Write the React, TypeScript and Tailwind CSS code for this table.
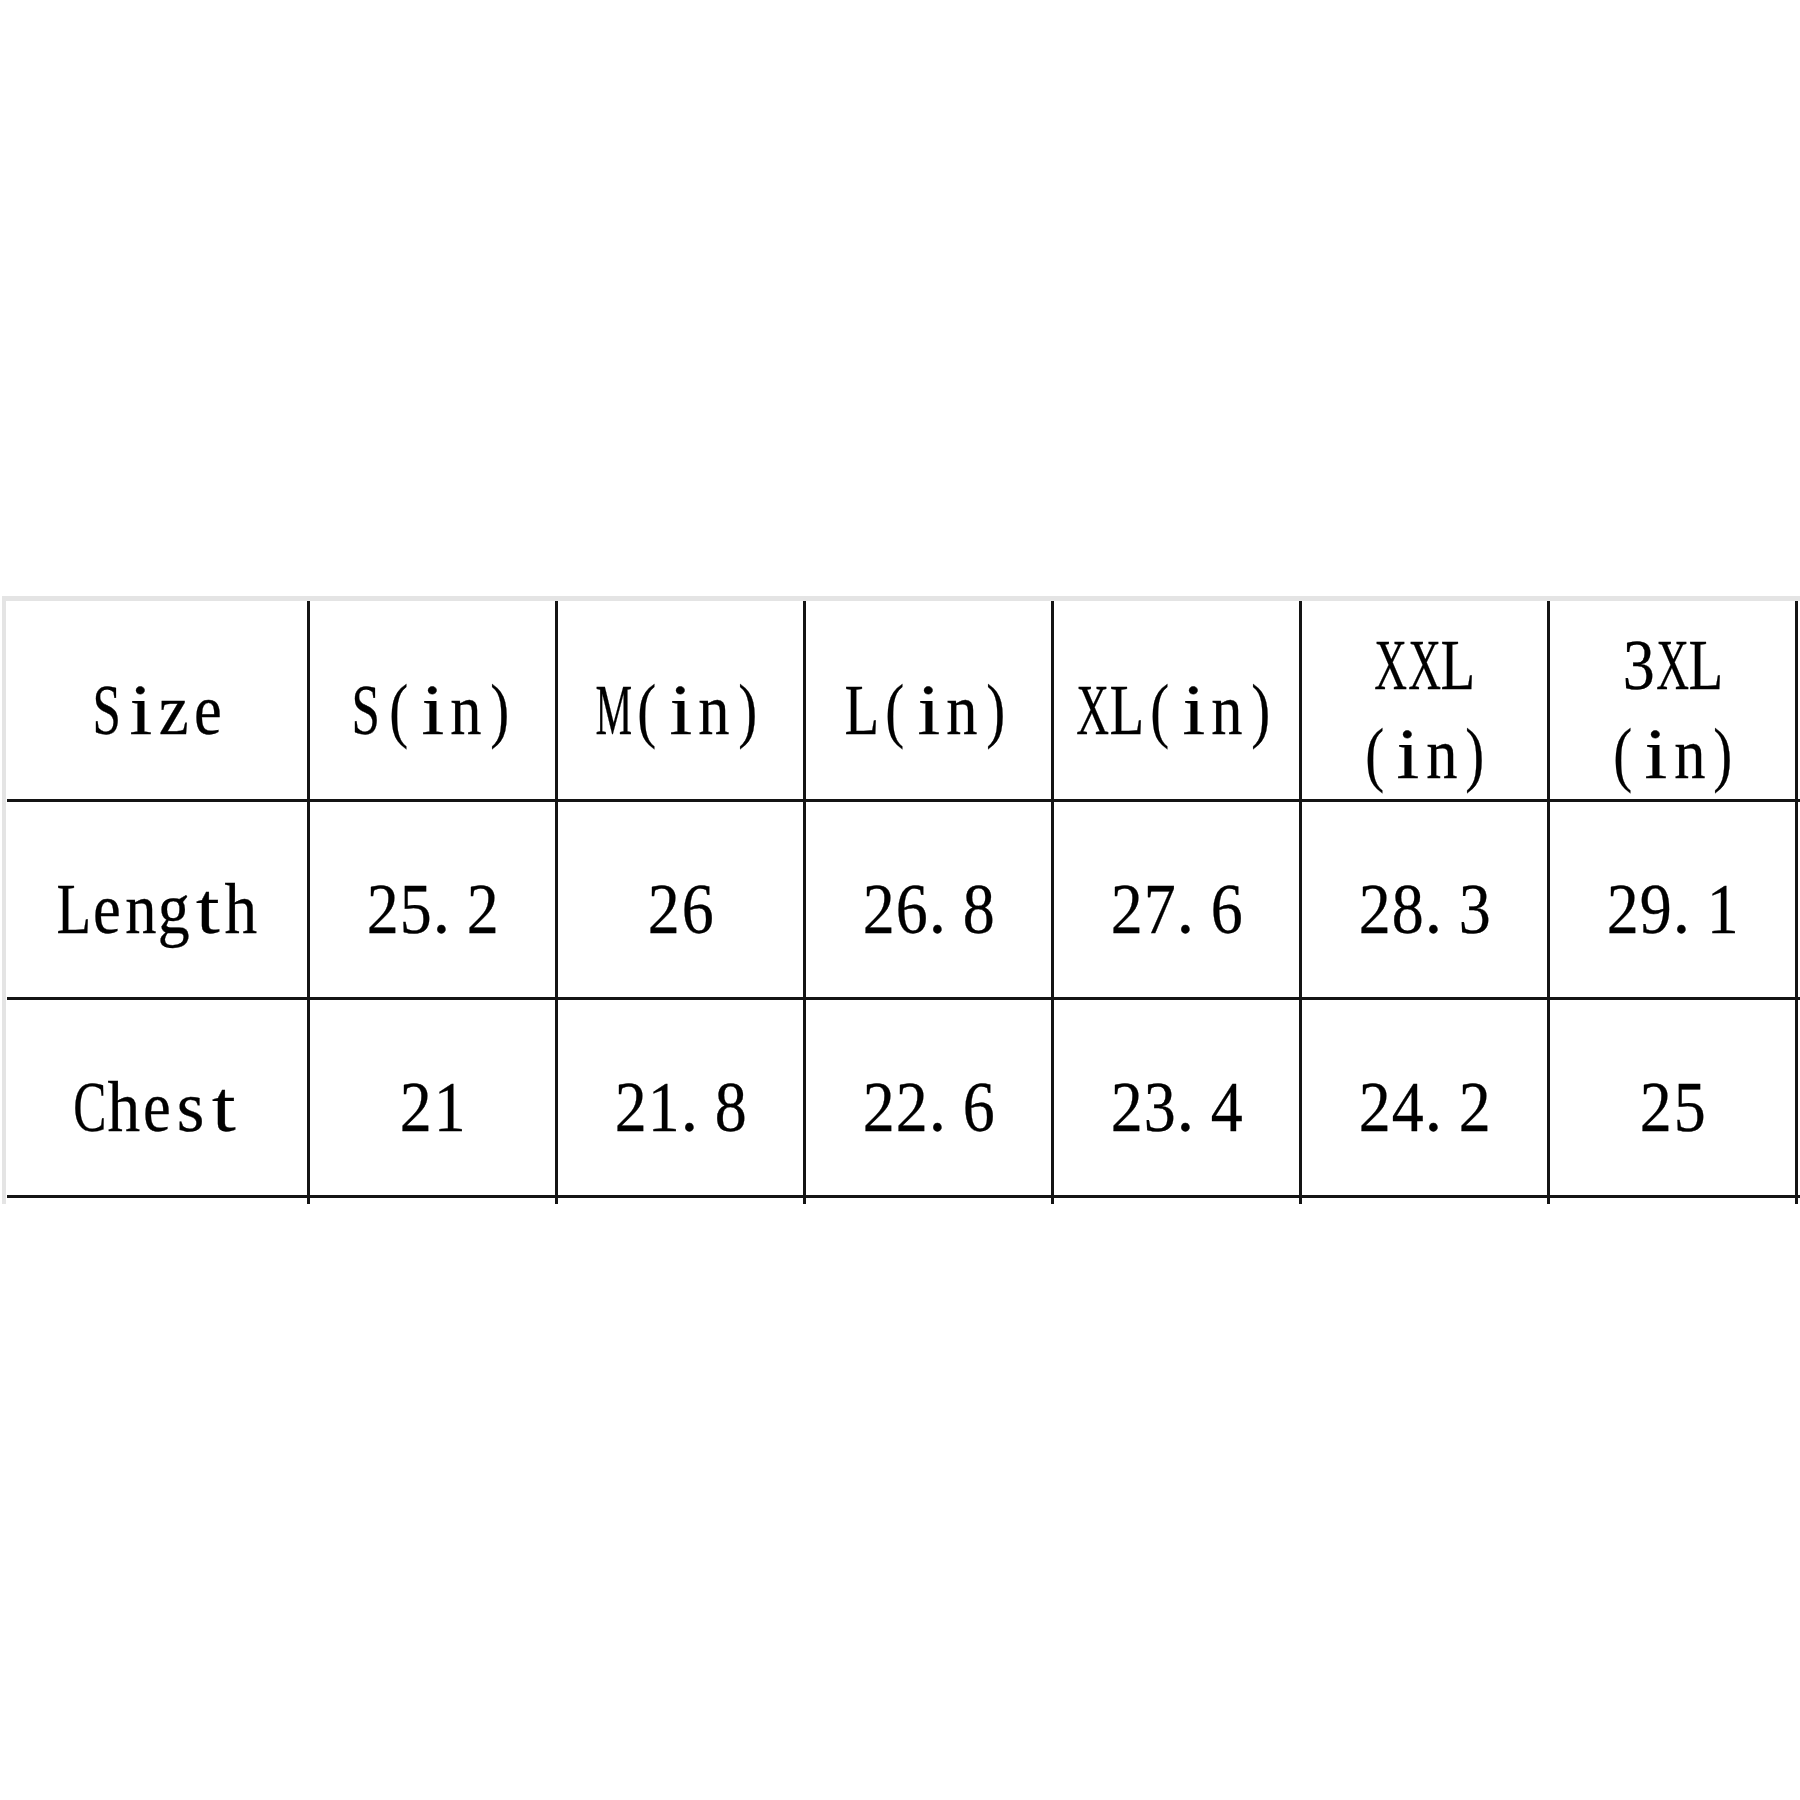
import React from "react";

const scaleClass: Record<string, string> = {
  "0": "scale-x-[0.9]",
  "1": "scale-x-[0.9]",
  "2": "scale-x-[0.9]",
  "3": "scale-x-[0.9]",
  "4": "scale-x-[0.9]",
  "5": "scale-x-[0.9]",
  "6": "scale-x-[0.9]",
  "7": "scale-x-[0.9]",
  "8": "scale-x-[0.9]",
  "9": "scale-x-[0.9]",
  S: "scale-x-[0.72]",
  M: "scale-x-[0.58]",
  L: "scale-x-[0.8]",
  X: "scale-x-[0.64]",
  C: "scale-x-[0.7]",
  n: "scale-x-[0.88]",
  h: "scale-x-[0.92]",
  e: "scale-x-[0.88]",
  g: "scale-x-[0.9]",
  z: "scale-x-[0.95]",
  t: "scale-x-[1.2]",
  i: "scale-x-[1.15]",
  "(": "scale-x-[0.8]",
  ")": "scale-x-[0.8]",
};

function Mono({ text }: { text: string }) {
  return (
    <span className="inline-flex">
      {[...text].map((c, i) => (
        <span
          key={i}
          className={`inline-flex w-[33.5px] ${c === "." ? "justify-start" : "justify-center"} ${scaleClass[c] ?? ""}`}
        >
          {c}
        </span>
      ))}
    </span>
  );
}

type Cell = string[];

const header: Cell[] = [
  ["Size"],
  ["S(in)"],
  ["M(in)"],
  ["L(in)"],
  ["XL(in)"],
  ["XXL", "(in)"],
  ["3XL", "(in)"],
];

const rows: Cell[][] = [
  [["Length"], ["25.2"], ["26"], ["26.8"], ["27.6"], ["28.3"], ["29.1"]],
  [["Chest"], ["21"], ["21.8"], ["22.6"], ["23.4"], ["24.2"], ["25"]],
];

function Row({ cells, h }: { cells: Cell[]; h: string }) {
  return (
    <div className={`flex ${h} border-b-[3px] border-[#141414]`}>
      {cells.map((lines, i) => (
        <div
          key={i}
          className={`${i === 0 ? "w-[303px]" : "w-[248px]"} shrink-0 border-r-[3px] border-[#141414] flex flex-col items-center justify-center pt-[20px]`}
        >
          {lines.map((l, j) => (
            <div key={j} className="leading-[89px] h-[89px]">
              <Mono text={l} />
            </div>
          ))}
        </div>
      ))}
    </div>
  );
}

export default function App() {
  return (
    <div
      className="w-[1800px] h-[1800px] bg-white pt-[596px] text-black text-[71px] [-webkit-text-stroke:0.3px_black]"
      style={{ fontFamily: '"Liberation Serif", "Times New Roman", serif' }}
    >
      <div className="ml-[2px] border-t-[5px] border-l-[4px] border-[#e4e4e4] pl-[1px]">
        <Row cells={header} h="h-[201px]" />
        {rows.map((r, i) => (
          <Row key={i} cells={r} h="h-[198px]" />
        ))}
        <div className="flex h-[6px]">
          {header.map((_, i) => (
            <div
              key={i}
              className={`${i === 0 ? "w-[303px]" : "w-[248px]"} shrink-0 border-r-[3px] border-[#141414]`}
            />
          ))}
        </div>
      </div>
    </div>
  );
}
